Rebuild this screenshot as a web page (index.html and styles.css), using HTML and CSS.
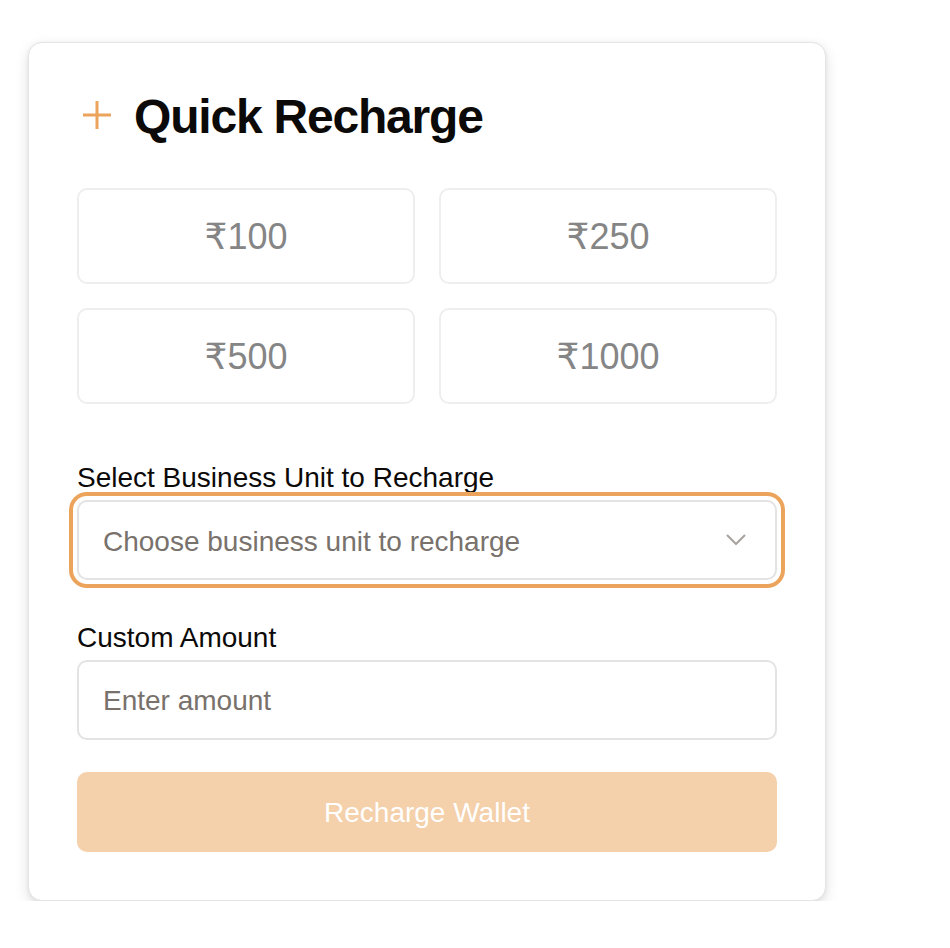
FILE: index.html
```html
<!DOCTYPE html>
<html lang="en">
<head>
<meta charset="utf-8">
<title>Quick Recharge</title>
<link rel="stylesheet" href="styles.css">
</head>
<body>
<div class="page">
  <section class="card">
    <header class="card-header">
      <svg class="plus-icon" width="28" height="28" viewBox="0 0 28 28" aria-hidden="true">
        <path d="M0 14H28M14 0V28" fill="none" stroke="currentColor" stroke-width="3" stroke-linecap="round"/>
      </svg>
      <h1 class="title">Quick Recharge</h1>
    </header>

    <div class="amount-grid">
      <button class="amount" type="button">₹100</button>
      <button class="amount" type="button">₹250</button>
      <button class="amount" type="button">₹500</button>
      <button class="amount" type="button">₹1000</button>
    </div>

    <div class="field field-select">
      <label class="field-label" for="bu">Select Business Unit to Recharge</label>
      <div class="select-wrap">
        <select id="bu" class="select">
          <option>Choose business unit to recharge</option>
        </select>
        <svg class="chevron" width="20" height="12" viewBox="0 0 20 12" aria-hidden="true">
          <path d="M1.5 1.5L10 10L18.5 1.5" fill="none" stroke="currentColor" stroke-width="2" stroke-linecap="round" stroke-linejoin="round"/>
        </svg>
      </div>
    </div>

    <div class="field field-input">
      <label class="field-label" for="amt">Custom Amount</label>
      <input id="amt" class="input" type="text" placeholder="Enter amount">
    </div>

    <button class="submit" type="button">Recharge Wallet</button>
  </section>
</div>
</body>
</html>
```

FILE: styles.css
```css
* {
  box-sizing: border-box;
}

html, body {
  margin: 0;
  padding: 0;
  background: #ffffff;
}

body {
  font-family: "Liberation Sans", Arial, "DejaVu Sans", sans-serif;
  color: #0c0a09;
}

.page {
  padding: 42px 0 0 28px;
}

.card {
  width: 798px;
  background: #ffffff;
  border: 1px solid #e4e4e4;
  border-radius: 14px;
  padding: 48px;
  box-shadow: 0 5px 14px rgba(0, 0, 0, 0.12), 0 1px 4px rgba(0, 0, 0, 0.06);
}

.card-header {
  display: flex;
  align-items: center;
  gap: 23px;
  height: 48px;
  margin-bottom: 49px;
}

.plus-icon {
  color: #eca45c;
  margin-left: 6px;
  flex: none;
}

.title {
  margin: 4px 0 0;
  font-size: 48px;
  line-height: 48px;
  font-weight: 700;
  letter-spacing: -0.025em;
  color: #0c0a09;
}

.amount-grid {
  display: grid;
  grid-template-columns: 1fr 1fr;
  gap: 24px;
  margin-bottom: 56px;
}

.amount {
  height: 96px;
  background: #ffffff;
  border: 2px solid #eeeeee;
  border-radius: 10px;
  font-family: "Liberation Sans", Arial, "DejaVu Sans", sans-serif;
  font-size: 36px;
  color: #858585;
  padding: 2px 0 0;
  cursor: pointer;
}

.field-select {
  margin-bottom: 40px;
}

.field-input {
  margin-bottom: 32px;
}

.field-label {
  display: block;
  font-size: 28px;
  line-height: 36px;
  margin-bottom: 4px;
  color: #0c0a09;
}

.select-wrap {
  position: relative;
}

.select {
  display: block;
  width: 100%;
  height: 80px;
  appearance: none;
  -webkit-appearance: none;
  background: #ffffff;
  border: 2px solid #e3e3e3;
  border-radius: 10px;
  padding: 2px 60px 0 24px;
  font-family: "Liberation Sans", Arial, sans-serif;
  font-size: 28px;
  color: #78716c;
  outline: none;
  box-shadow: 0 0 0 4px #ffffff, 0 0 0 8px #eca45c;
}

.chevron {
  position: absolute;
  right: 31px;
  top: 34px;
  color: #a8a29e;
  pointer-events: none;
}

.input {
  display: block;
  width: 100%;
  height: 80px;
  background: #ffffff;
  border: 2px solid #e3e3e3;
  border-radius: 10px;
  padding: 2px 24px 0;
  font-family: "Liberation Sans", Arial, sans-serif;
  font-size: 28px;
  color: #0c0a09;
  outline: none;
}

.input::placeholder {
  color: #78716c;
}

.submit {
  display: block;
  width: 100%;
  height: 80px;
  border: none;
  border-radius: 10px;
  background: #f4d0ab;
  color: #ffffff;
  font-family: "Liberation Sans", Arial, sans-serif;
  font-size: 28px;
  padding: 2px 0 0;
  cursor: pointer;
}
```
